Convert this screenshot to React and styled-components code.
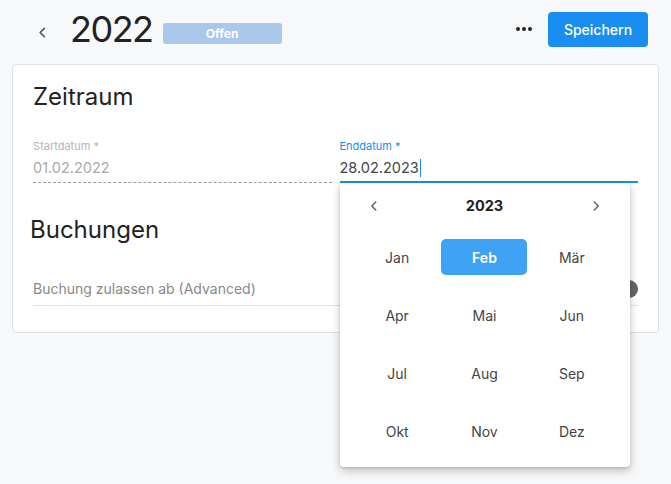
import React, { useState } from "react";
import styled, { createGlobalStyle } from "styled-components";

const GlobalStyle = createGlobalStyle`
  html, body {
    margin: 0;
    padding: 0;
    background: #f7f8fa;
    font-family: Inter, "Noto Sans", sans-serif;
    color: #333;
  }
`;

const Page = styled.div`
  width: 671px;
  height: 484px;
  overflow: hidden;
  box-sizing: border-box;
`;

const Header = styled.header`
  display: flex;
  align-items: center;
  height: 58px;
  padding: 0 23px 0 33px;
`;

const BackButton = styled.button`
  border: 0;
  background: none;
  padding: 0;
  width: 18px;
  height: 18px;
  display: flex;
  align-items: center;
  justify-content: center;
  color: #555;
  margin-right: 19px;
  margin-top: 6px;
  cursor: pointer;
`;

const Title = styled.h1`
  margin: 0;
  font-size: 36px;
  font-weight: 400;
  color: #222;
  letter-spacing: -1.5px;
  line-height: 1;
`;

const Badge = styled.span`
  margin-left: 10px;
  margin-top: 8px;
  width: 119px;
  height: 21px;
  border-radius: 3px;
  background: #aac8ec;
  color: #fff;
  font-size: 12px;
  font-weight: 700;
  display: flex;
  align-items: center;
  justify-content: center;
`;

const Spacer = styled.div`
  flex: 1;
`;

const MoreButton = styled.button`
  border: 0;
  background: none;
  padding: 0;
  margin-right: 16px;
  display: flex;
  gap: 2px;
  cursor: pointer;
`;

const Dot = styled.span`
  width: 4px;
  height: 4px;
  border-radius: 50%;
  background: #222;
`;

const PrimaryButton = styled.button`
  width: 100px;
  height: 35px;
  border: 0;
  border-radius: 4px;
  background: #1a8ef0;
  color: #fff;
  font-family: inherit;
  font-size: 14px;
  font-weight: 500;
  cursor: pointer;
`;

const Card = styled.section`
  margin: 6px 12px 0;
  height: 269px;
  box-sizing: border-box;
  background: #fff;
  border: 1px solid #dde0e4;
  border-radius: 4px;
  padding: 16px 20px 0 20px;
`;

const SectionTitle = styled.h2`
  margin: 0 0 0 ${(p) => p.$indent || 0}px;
  font-size: 24px;
  font-weight: 400;
  color: #222;
  line-height: 32px;
`;

const FieldRow = styled.div`
  display: grid;
  grid-template-columns: 1fr 1fr;
  gap: 8px;
  margin-top: 26px;
  position: relative;
`;

const Field = styled.div`
  position: relative;
  display: flex;
  flex-direction: column;
  border-bottom: ${(p) =>
    p.$disabled ? "1px dashed #9a9a9a" : p.$focused ? "2px solid #1a8ef0" : "1px solid #ddd"};
  padding-bottom: ${(p) => (p.$focused ? 4 : 5)}px;
`;

const Label = styled.label`
  font-size: 11px;
  color: ${(p) => (p.$focused ? "#1a8ef0" : "#b5b5b5")};
  line-height: 14px;
`;

const Value = styled.div`
  margin-top: 6px;
  font-size: 14.5px;
  line-height: 18px;
  color: ${(p) => (p.$disabled ? "#aaa" : "#444")};
  display: flex;
  align-items: center;
`;

const Caret = styled.span`
  display: inline-block;
  width: 1px;
  height: 18px;
  background: #1a8ef0;
  margin-left: 1px;
`;

const BookingTitleWrap = styled.div`
  margin-top: 31px;
`;

const SwitchRow = styled.div`
  margin-top: 34px;
  display: flex;
  align-items: center;
  justify-content: space-between;
  padding-bottom: 7px;
  border-bottom: 1px solid #e2e2e2;
`;

const SwitchLabel = styled.span`
  font-size: 14px;
  color: #888;
  line-height: 18px;
`;

const SwitchTrack = styled.span`
  position: relative;
  width: 30px;
  height: 12px;
  border-radius: 6px;
  background: #d6d6d6;
  display: inline-block;
`;

const SwitchKnob = styled.span`
  position: absolute;
  right: 0;
  top: -3px;
  width: 18px;
  height: 18px;
  border-radius: 50%;
  background: #666;
`;

const Popup = styled.div`
  position: absolute;
  left: calc(50% + 4px);
  top: 100%;
  width: 290px;
  background: #fff;
  border-radius: 0 0 4px 4px;
  box-shadow: 0 4px 10px rgba(0, 0, 0, 0.22), 0 1px 3px rgba(0, 0, 0, 0.12);
  padding: 0 14px 7px;
  box-sizing: border-box;
  z-index: 5;
`;

const PopupHeader = styled.div`
  height: 45px;
  display: flex;
  align-items: center;
  justify-content: space-between;
  padding: 0 13px 0 13px;
`;

const YearLabel = styled.span`
  font-size: 14.5px;
  font-weight: 700;
  color: #222;
`;

const NavButton = styled.button`
  border: 0;
  background: none;
  padding: 0;
  color: #666;
  display: flex;
  cursor: pointer;
`;

const MonthGrid = styled.div`
  display: grid;
  grid-template-columns: repeat(3, 1fr);
  grid-auto-rows: 58px;
`;

const MonthCell = styled.div`
  display: flex;
  align-items: center;
  justify-content: center;
`;

const MonthButton = styled.button`
  width: 86px;
  height: 36px;
  border: 0;
  border-radius: 5px;
  font-family: inherit;
  font-size: 14px;
  cursor: pointer;
  background: ${(p) => (p.$active ? "#3ea3f5" : "transparent")};
  color: ${(p) => (p.$active ? "#fff" : "#444")};
  font-weight: ${(p) => (p.$active ? 600 : 400)};
`;

const months = ["Jan", "Feb", "Mär", "Apr", "Mai", "Jun", "Jul", "Aug", "Sep", "Okt", "Nov", "Dez"];

const Chevron = ({ dir = "left", size = 14 }) => (
  <svg width={size} height={size} viewBox="0 0 16 16" fill="none">
    <path
      d={dir === "left" ? "M10 3.5 5.5 8l4.5 4.5" : "M6 3.5 10.5 8 6 12.5"}
      stroke="currentColor"
      strokeWidth="1.8"
      strokeLinecap="round"
      strokeLinejoin="round"
    />
  </svg>
);

export default function App() {
  const [month, setMonth] = useState(1);

  return (
    <Page>
      <GlobalStyle />
      <Header>
        <BackButton aria-label="Zurück">
          <Chevron size={15} />
        </BackButton>
        <Title>2022</Title>
        <Badge>Offen</Badge>
        <Spacer />
        <MoreButton aria-label="Mehr">
          <Dot />
          <Dot />
          <Dot />
        </MoreButton>
        <PrimaryButton>Speichern</PrimaryButton>
      </Header>

      <Card>
        <SectionTitle>Zeitraum</SectionTitle>
        <FieldRow>
          <Field $disabled>
            <Label>Startdatum *</Label>
            <Value $disabled>01.02.2022</Value>
          </Field>
          <Field $focused>
            <Label $focused>Enddatum *</Label>
            <Value>
              28.02.2023
              <Caret />
            </Value>
          </Field>
          <Popup>
            <PopupHeader>
              <NavButton aria-label="Vorheriges Jahr">
                <Chevron />
              </NavButton>
              <YearLabel>2023</YearLabel>
              <NavButton aria-label="Nächstes Jahr">
                <Chevron dir="right" />
              </NavButton>
            </PopupHeader>
            <MonthGrid>
              {months.map((m, i) => (
                <MonthCell key={m}>
                  <MonthButton $active={i === month} onClick={() => setMonth(i)}>
                    {m}
                  </MonthButton>
                </MonthCell>
              ))}
            </MonthGrid>
          </Popup>
        </FieldRow>

        <BookingTitleWrap>
          <SectionTitle $indent={-3}>Buchungen</SectionTitle>
        </BookingTitleWrap>
        <SwitchRow>
          <SwitchLabel>Buchung zulassen ab (Advanced)</SwitchLabel>
          <SwitchTrack>
            <SwitchKnob />
          </SwitchTrack>
        </SwitchRow>
      </Card>
    </Page>
  );
}
